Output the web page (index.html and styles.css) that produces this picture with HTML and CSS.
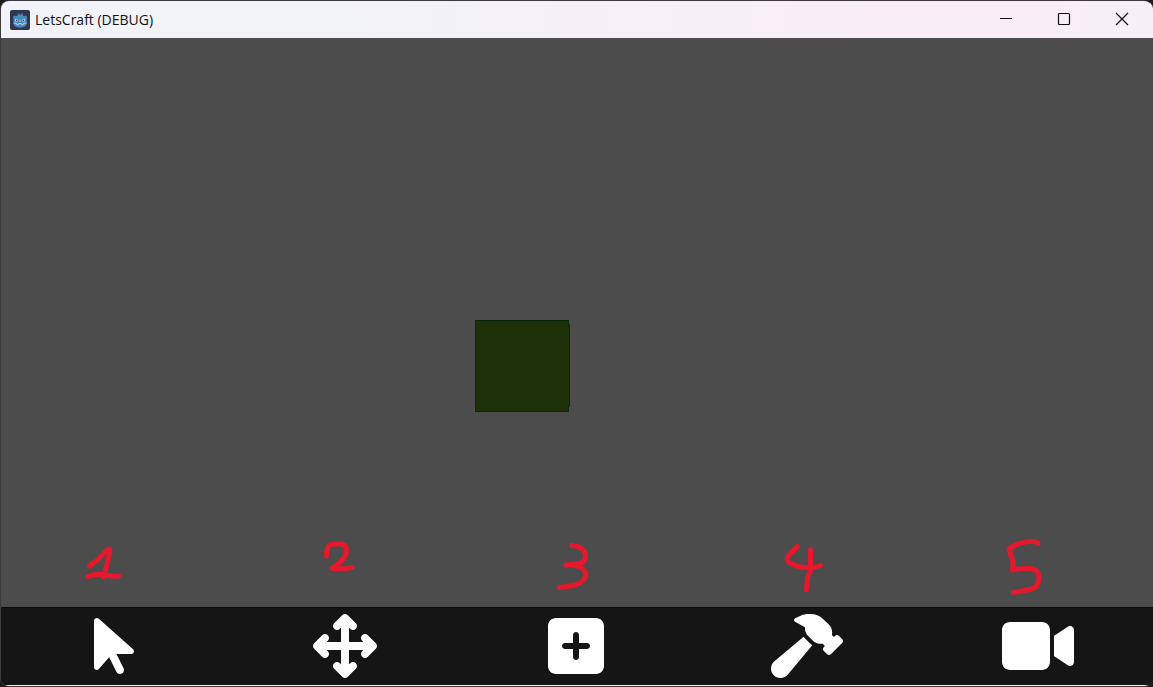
FILE: index.html
```
<!DOCTYPE html>
<html lang="en">
<head>
<meta charset="utf-8">
<title>LetsCraft (DEBUG)</title>
<link rel="stylesheet" href="styles.css">
</head>
<body>
<div class="window">
  <header class="titlebar">
    <svg class="app-icon" viewBox="0 0 20 20" aria-hidden="true">
      <rect width="20" height="20" rx="2" fill="#323650"/>
      <path d="M3 7 4.500 5.500l1.300.8L7.800 5.600V3.900l1.600-.3.5 1.500h.8l.5-1.500 1.600.3v1.700l1.700.7 1.300-.8L17.200 7 16.700 8.500v5c0 2.400-2.900 4-6.500 4s-6.700-1.600-6.700-4v-5z" fill="#478cbf"/>
      <path d="M3.600 13l2.700.3.4 1.300h1.900v-1h2.800v1h1.900l.4-1.300 2.900-.3" fill="none" stroke="#c9def0" stroke-width=".8"/>
      <circle cx="6.400" cy="10.400" r="1.400" fill="#e6eff7"/><circle cx="13.800" cy="10.400" r="1.400" fill="#e6eff7"/>
      <circle cx="6.600" cy="10.400" r=".9" fill="#414042"/><circle cx="13.600" cy="10.400" r=".9" fill="#414042"/>
      <path d="M10.100 9.800v1.700" stroke="#e6eff7" stroke-width=".8"/>
    </svg>
    <h1 class="title">LetsCraft (DEBUG)</h1>
    <div class="window-controls">
      <button class="control" type="button" aria-label="Minimize"><svg class="glyph" viewBox="0 0 14 14"><path d="M1 6.500h12"/></svg></button>
      <button class="control" type="button" aria-label="Maximize"><svg class="glyph" viewBox="0 0 14 14"><rect x="1.500" y="1.500" width="11" height="11" rx="1"/></svg></button>
      <button class="control" type="button" aria-label="Close"><svg class="glyph" viewBox="0 0 14 14"><path d="M1 1l12 12M13 1 1 13"/></svg></button>
    </div>
  </header>

  <main class="viewport">
    <svg class="cube" viewBox="0 0 95 92" role="img" aria-label="Block">
      <path d="M.5.5h93v4h1v82h-1v5H.5z" fill="#1e3008" stroke="#05270c"/>
    </svg>
    <div class="marks">
      <svg class="mark" viewBox="64 530 100 77" role="img" aria-label="1"><path d="M89.500 566C96 562 100 558 104 553Q110 546 110 551L104 577M88 576.500Q96 573 105 575T119 576"/></svg>
      <svg class="mark" viewBox="295 530 100 77" role="img" aria-label="2"><path d="M326.500 556C326 549 328 544 333 544H341C347 545 347 549 346 554Q345 558 341 561 337 566 332 568.500L342 569 352 567.500"/></svg>
      <svg class="mark" viewBox="526 530 100 77" role="img" aria-label="3"><path d="M571.500 545.500C581 546 586 551 585.500 557Q585 562 579 563.500L566 565C577 564 586 568 586 575 585 582 576 586 567 586.500L559 587.500"/></svg>
      <svg class="mark" viewBox="757 530 100 77" role="img" aria-label="4"><path d="M797.500 546.500 790 554C785 559 787 562 792 564Q799 568 810 567.500 815 567.500 820.500 565.500M810.500 550V571L807.500 577 806.500 589.500"/></svg>
      <svg class="mark" viewBox="988 530 100 77" role="img" aria-label="5"><path d="M1038 543.500Q1036 541 1031 541.500 1018 542 1009 549L1013 562 1012.500 570Q1021 568 1030 568.500C1038 570 1039 573 1039 579Q1038 588 1030 589.500L1013.500 592.500"/></svg>
    </div>
  </main>

  <nav class="toolbar" aria-label="Tools">
    <button class="tool" type="button" aria-label="Select"><svg class="tool-icon" viewBox="0 0 320 512"><path d="M0 55.200V426c0 12.200 9.900 22 22 22c6.300 0 12.400-2.700 16.600-7.500L121.200 346l58.100 116.300c7.900 15.800 27.100 22.200 42.900 14.300s22.200-27.100 14.300-42.900L179.800 320H297.900c12.200 0 22.100-9.900 22.100-22.100c0-6.300-2.700-12.300-7.400-16.500L38.600 37.900C34.300 34.100 28.900 32 23.200 32C10.400 32 0 42.400 0 55.200z"/></svg></button>
    <button class="tool" type="button" aria-label="Move"><svg class="tool-icon" viewBox="0 0 512 512"><path d="M278.600 9.400c-12.500-12.500-32.800-12.500-45.300 0l-64 64c-12.500 12.500-12.500 32.800 0 45.300s32.800 12.500 45.300 0l9.400-9.400V224H109.300l9.400-9.400c12.500-12.500 12.500-32.800 0-45.300s-32.800-12.500-45.300 0l-64 64c-12.500 12.500-12.500 32.800 0 45.300l64 64c12.500 12.500 32.800 12.500 45.300 0s12.500-32.800 0-45.300l-9.400-9.400H224V402.700l-9.400-9.400c-12.500-12.500-32.800-12.500-45.300 0s-12.500 32.800 0 45.300l64 64c12.500 12.500 32.800 12.500 45.300 0l64-64c12.500-12.500 12.500-32.800 0-45.300s-32.800-12.500-45.300 0l-9.400 9.400V288H402.700l-9.400 9.400c-12.500 12.500-12.500 32.800 0 45.300s32.800 12.500 45.300 0l64-64c12.500-12.500 12.500-32.800 0-45.300l-64-64c-12.500-12.500-32.800-12.500-45.300 0s-12.500 32.800 0 45.300l9.400 9.400H288V109.300l9.400 9.400c12.500 12.500 32.800 12.500 45.300 0s12.500-32.800 0-45.300l-64-64z"/></svg></button>
    <button class="tool" type="button" aria-label="Add"><svg class="tool-icon" viewBox="0 0 448 512"><path d="M64 32C28.700 32 0 60.700 0 96V416c0 35.300 28.700 64 64 64H384c35.300 0 64-28.700 64-64V96c0-35.300-28.700-64-64-64H64zM200 344V280H136c-13.300 0-24-10.700-24-24s10.700-24 24-24h64V168c0-13.300 10.700-24 24-24s24 10.700 24 24v64h64c13.300 0 24 10.700 24 24s-10.700 24-24 24H248v64c0 13.300-10.700 24-24 24s-24-10.700-24-24z"/></svg></button>
    <button class="tool" type="button" aria-label="Build"><svg class="tool-icon" viewBox="0 0 576 512"><path d="M413.500 237.500c-28.200 4.800-58.200-3.600-80-25.400l-38.100-38.100C280.400 159 272 138.800 272 117.600V105.500L192.300 62c-5.300-2.900-8.600-8.600-8.300-14.700s3.900-11.500 9.500-14l47.200-21C259.100 4.200 279 0 299.200 0h18.100c36.700 0 72 14 98.700 39.100l44.600 42c24.200 22.800 33.200 55.700 26.600 86L503 183l8-8c9.400-9.400 24.600-9.400 33.900 0l24 24c9.400 9.400 9.400 24.600 0 33.900l-88 88c-9.400 9.400-24.600 9.400-33.900 0l-24-24c-9.400-9.400-9.400-24.600 0-33.900l8-8-17.500-17.500zM27.400 377.100L260.900 182.600c3.500 4.900 7.500 9.600 11.800 14l38.100 38.100c6 6 12.400 11.200 19.200 15.700L134.900 484.600c-14.500 17.400-36 27.400-58.600 27.400C34.100 512 0 477.800 0 435.700c0-22.600 10.100-44.100 27.400-58.600z"/></svg></button>
    <button class="tool" type="button" aria-label="Camera"><svg class="tool-icon" viewBox="0 0 576 512"><path d="M0 128C0 92.700 28.700 64 64 64H320c35.300 0 64 28.700 64 64V384c0 35.300-28.700 64-64 64H64c-35.300 0-64-28.700-64-64V128zM559.100 99.800c10.400 5.600 16.900 16.400 16.900 28.200V384c0 11.800-6.500 22.600-16.900 28.200s-23 5-32.900-1.600l-96-64L416 337.100V320 192 174.900l14.200-9.500 96-64c9.800-6.500 22.400-7.200 32.900-1.600z"/></svg></button>
  </nav>
</div>
</body>
</html>
```

FILE: styles.css
```
* {
  box-sizing: border-box;
}

body {
  margin: 0;
  background: #1c1b1c;
}

button {
  margin: 0;
  padding: 0;
  border: 0;
  background: none;
  font: inherit;
}

.window {
  display: flex;
  flex-direction: column;
  height: 100vh;
  border: 1px solid #3c3a3c;
  border-right: 0;
  border-radius: 9px;
  overflow: hidden;
  background: #151515;
}

.titlebar {
  display: flex;
  flex: none;
  align-items: center;
  height: 37px;
  padding-left: 9px;
  background: linear-gradient(90deg, #f2f2f9 0%, #f2f2f9 30%, #f9eef6 75%, #f9eef6 90%, #f5f0f8 100%);
  color: #111;
}

.app-icon {
  width: 20px;
  height: 20px;
}

.title {
  margin: 0 0 0 5px;
  font: 400 14px/20px "Segoe UI", "Open Sans", "Noto Sans", sans-serif;
}

.window-controls {
  display: flex;
  height: 100%;
  margin-left: auto;
  padding: 0 2px 2px 0;
}

.control {
  display: flex;
  align-items: center;
  justify-content: center;
  width: 58px;
}

.glyph {
  width: 14px;
  height: 14px;
  fill: none;
  stroke: #111;
  stroke-width: 1.2;
}

.viewport {
  position: relative;
  display: flex;
  flex: 1;
  align-items: flex-end;
  background: #4c4c4c;
}

.cube {
  position: absolute;
  left: 474px;
  top: 282px;
  width: 95px;
  height: 92px;
}

.marks,
.toolbar {
  display: grid;
  grid-template-columns: repeat(5, 1fr);
  column-gap: 5px;
  justify-items: center;
  width: 100%;
  padding-right: 2px;
}

.mark {
  display: block;
  width: 100px;
  height: 77px;
  fill: none;
  stroke: #e5182d;
  stroke-width: 5;
  stroke-linecap: round;
  stroke-linejoin: round;
}

.toolbar {
  flex: none;
  border-top: 1px solid #0c0c0c;
  border-bottom: 1px solid #f4eef4;
  background: #151515;
}

.tool {
  display: flex;
  justify-content: center;
  width: 100%;
  padding: 6px 0 7px;
}

.tool-icon {
  display: block;
  height: 64px;
  fill: #fff;
}
```
